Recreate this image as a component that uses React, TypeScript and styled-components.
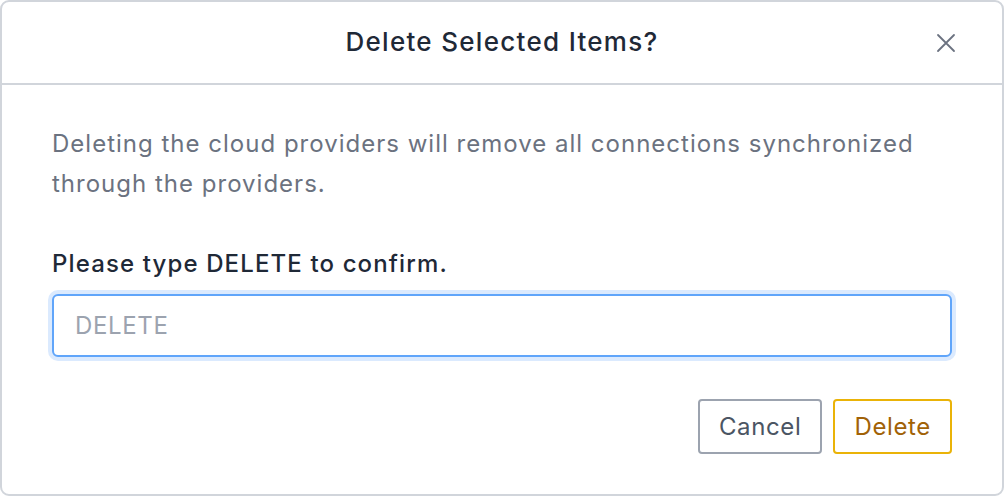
import styled, { createGlobalStyle } from "styled-components";

const GlobalStyle = createGlobalStyle`
  html, body {
    margin: 0;
    padding: 0;
    background: #ffffff;
  }
  * {
    box-sizing: border-box;
  }
`;

const CloseIcon = () => (
  <svg width="22" height="22" viewBox="0 0 22 22" fill="none">
    <path
      d="M3 3L19 19M19 3L3 19"
      stroke="#6b7280"
      strokeWidth="1.8"
      strokeLinecap="round"
    />
  </svg>
);

export default function App() {
  return (
    <>
      <GlobalStyle />
      <Modal>
        <Header>
          <Title>Delete Selected Items?</Title>
          <CloseButton aria-label="Close">
            <CloseIcon />
          </CloseButton>
        </Header>
        <Body>
          <Description>
            Deleting the cloud providers will remove all connections
            synchronized through the providers.
          </Description>
          <Label htmlFor="confirm">Please type DELETE to confirm.</Label>
          <Input id="confirm" placeholder="DELETE" autoFocus />
          <Footer>
            <Button>Cancel</Button>
            <Button $variant="danger">Delete</Button>
          </Footer>
        </Body>
      </Modal>
    </>
  );
}

const Modal = styled.div`
  width: 1004px;
  height: 496px;
  border: 2px solid #d1d5db;
  border-radius: 9px;
  background: #fff;
  font-family: Inter, "Noto Sans", sans-serif;
  letter-spacing: 0.04em;
  display: flex;
  flex-direction: column;
  overflow: hidden;
`;

const Header = styled.header`
  position: relative;
  height: 83px;
  flex-shrink: 0;
  display: flex;
  align-items: center;
  justify-content: center;
  border-bottom: 2px solid #d1d5db;
`;

const Title = styled.h2`
  margin: 0 0 2px;
  font-size: 26px;
  font-weight: 500;
  letter-spacing: 0.05em;
  color: #1f2937;
`;

const CloseButton = styled.button`
  position: absolute;
  right: 45px;
  top: 50%;
  transform: translateY(-50%);
  background: none;
  border: none;
  padding: 0;
  display: flex;
  cursor: pointer;
`;

const Body = styled.div`
  padding: 39px 50px 0 50px;
  display: flex;
  flex-direction: column;
`;

const Description = styled.p`
  margin: 0;
  font-size: 24px;
  line-height: 40px;
  letter-spacing: 0.042em;
  color: #6b7280;
`;

const Label = styled.label`
  margin-top: 43px;
  font-size: 24px;
  line-height: 34px;
  font-weight: 500;
  letter-spacing: 0.047em;
  color: #1f2937;
`;

const Input = styled.input`
  margin-top: 13px;
  height: 63px;
  width: 100%;
  padding: 0 21px;
  border: 2px solid #60a5fa;
  border-radius: 6px;
  box-shadow: 0 0 0 4px #dbeafe;
  outline: none;
  font-family: inherit;
  letter-spacing: inherit;
  font-size: 24px;
  color: #1f2937;
  caret-color: #111827;

  &::placeholder {
    color: #9ca3af;
  }
`;

const Footer = styled.div`
  margin-top: 42px;
  display: flex;
  justify-content: flex-end;
  gap: 11px;
`;

const Button = styled.button<{ $variant?: "danger" }>`
  height: 55px;
  padding: 0 19px;
  border-radius: 4px;
  background: #fff;
  font-family: inherit;
  letter-spacing: inherit;
  font-size: 24px;
  cursor: pointer;
  border: 2px solid ${(p) => (p.$variant === "danger" ? "#eab308" : "#9ca3af")};
  color: ${(p) => (p.$variant === "danger" ? "#a16207" : "#4b5563")};
`;
